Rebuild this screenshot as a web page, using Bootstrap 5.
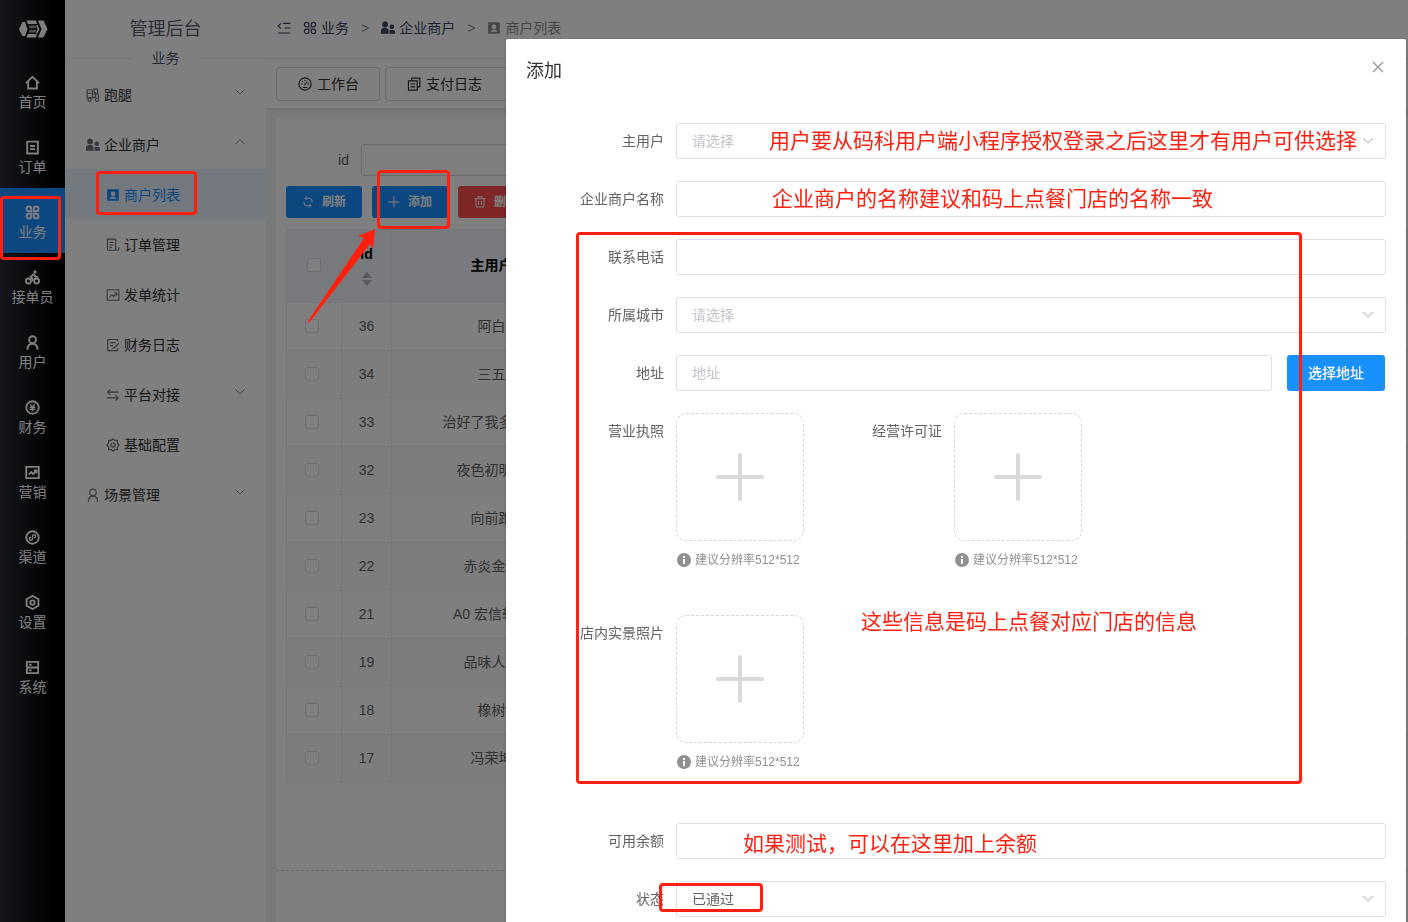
<!DOCTYPE html>
<html lang="zh-CN">
<head>
<meta charset="utf-8">
<meta name="viewport" content="width=device-width, initial-scale=1">
<title>管理后台</title>
<link href="https://cdn.jsdelivr.net/npm/bootstrap@5.3.0/dist/css/bootstrap.min.css" rel="stylesheet">
<style>
:root{--blue:#1890ff;--line:#dcdfe6;--note:#ff2010}
body{font-family:"Liberation Sans","Noto Sans CJK SC",sans-serif;font-size:14px;line-height:20px;color:#303133;overflow:hidden}
a{color:inherit;text-decoration:none}
.ico{width:14px;height:14px;flex:none;fill:none;stroke:currentColor;stroke-width:2}
.shell{height:100vh}
/* icon rail */
.rail{width:65px;background:linear-gradient(90deg,#282c36,#000 85%);color:#fff}
.rail-logo{height:58px}
.rail-logo svg{width:30px;height:20px}
.rail-item{height:65px;gap:2px;padding-top:5px}
.rail-item .ico{width:15px;height:15px;stroke-width:3}
.rail-item.active{background:var(--blue)}
/* section menu */
.side{width:201px;background:#fff}
.side-title{height:58px;font-size:18px;color:#5a6070}
.side-split{height:0;color:#505668}
.side-split::before,.side-split::after{content:"";flex:1;height:1px;background:#ebeef5}
.side-split span{width:68px;text-align:center}
.side-menu{padding-top:11px}
.side-item{height:50px;padding:2px 20px 0 21px;gap:4px}
.side-item.sub{padding-left:41px}
.side-item .ico{color:#6c6f78}
.side-item .arrow{width:12px;height:12px;margin:-6px 0 0 auto;color:#82858e}
.side-item.active,.side-item.active .ico{color:var(--blue)}
.side-item.active{background:#e6f3ff}
/* main area */
.work{background:#f0f4f4;min-width:0}
.topbar{height:59px;background:#fff;border-bottom:1px solid #ebeef5;padding:0 11px 2px;color:#3c4560}
.topbar ol{gap:12px}
.topbar li a,.topbar li span{gap:4px}
.topbar .sep{color:#8a8f9c}
.topbar .current{color:#8c8c8c}
.tabs{padding:8px 10px 7px;gap:5px;background:#fff;box-shadow:0 1px 4px rgba(0,21,41,.12)}
.tab-btn{height:34px;padding:0 20px 0 21px;gap:5px;border:1px solid #d4d8e2;border-radius:3px;background:#fff;color:#303133}
.tab-btn.closable{padding-right:40px}
.panel{margin:10px 0 0 10px;background:#fff;padding:26px 0 0 10px}
.filter{gap:12px}
.filter label{width:63px;text-align:right;color:#606266}
.filter input{height:32px;width:300px;border:1px solid #d0d4de;border-radius:3px}
.tools{gap:10px;margin:10px 0 11px}
.tool-btn{height:32px;width:76px;gap:8px;border:0;border-radius:3px;background:var(--blue);color:#fff;font-size:12px;font-weight:700}
.tool-btn .ico{width:12px;height:12px}
.tool-btn.del{background:#ff4d4f}
.grid{table-layout:fixed;width:1140px;border-collapse:collapse;text-align:center;color:#606266}
.grid th,.grid td{border:1px solid #ebeef5;height:48px;padding:0 0 2px;white-space:nowrap;overflow:hidden}
.grid th{height:73px;background:#f1f5fa;color:#000}
.grid tbody tr:nth-child(even){background:#fafafa}
.grid td:first-child{padding-right:4px}
.col-tick{width:55px}
.col-id{width:50px}
.col-user{width:200px}
.tick{appearance:none;display:block;width:14px;height:14px;margin:0 auto;border:1px solid #dcdfe6;border-radius:2px;background:#fff}
.sorter{width:10px;height:14px;fill:#b0b3ba}
.foot-line{margin:87px 0 0 -10px;border-top:1px dashed #d0d0d0}
/* dialog */
.veil{background:rgba(0,0,0,.5);overflow:hidden}
.dlg{max-width:900px;margin:39px 2px 0 auto}
.dlg .modal-content{border:0;border-radius:2px;box-shadow:0 1px 3px rgba(0,0,0,.3);padding:0 20px 40px;color:#606266}
.dlg-head{height:84px;padding-top:20px}
.dlg-head h1{font-size:18px;line-height:24px;color:#303133}
.dlg-close{width:16px;height:16px;border:0;padding:0;background:none;color:#909399}
.f-row{margin-bottom:22px}
.f-label{width:150px;padding-right:12px;line-height:36px;text-align:right;flex:none;white-space:nowrap}
.f-box{height:36px;flex:1;min-width:0;border:1px solid var(--line);border-radius:3px;padding:0 15px;color:#606266;background-color:#fff}
.f-box::placeholder{color:#c0c4cc}
select.f-box{appearance:none;background:#fff url("data:image/svg+xml,%3Csvg xmlns='http://www.w3.org/2000/svg' width='12' height='12' fill='none' stroke='%23c0c4cc' stroke-width='1.200'%3E%3Cpath d='M1 3l5 5 5-5'/%3E%3C/svg%3E") no-repeat right 11px center}
select.blank{color:#c0c4cc}
.pick{width:98px;height:36px;margin:0 1px 0 15px;border:0;border-radius:3px;background:var(--blue);color:#fff;font-weight:500}
.shot{width:128px;height:128px;border:1px dashed #d5d5d5;border-radius:10px;background:#fff;padding:0}
.shot svg{width:50px;height:50px;stroke:#d9d9d9;stroke-width:4;stroke-linecap:round}
.hint{height:36px;margin-bottom:16px;gap:4px;font-size:12px;color:#909090;padding:1px 0 0 1px}
.hint svg{width:14px;height:14px}
.money{margin-top:6px}
/* hand-drawn notes laid over the screen */
.note{position:absolute;pointer-events:none;z-index:5}
.note-box{border:3px solid var(--note);border-radius:4px}
.note-text{font-size:21px;line-height:28px;color:var(--note);white-space:nowrap}
.notes-left{position:fixed;inset:0;z-index:2000;pointer-events:none}
.n-user{left:263px;top:88px}
.n-name{left:266px;top:146px}
.n-shop{left:355px;top:569px}
.n-money{left:237px;top:791px}
.n-info{left:70px;top:193px;width:726px;height:552px}
.n-state{left:153px;top:844px;width:104px;height:29px}
.n-rail{left:0;top:196px;width:61px;height:64px}
.n-menu{left:96px;top:171px;width:101px;height:44px}
.n-add{left:377px;top:170px;width:73px;height:59px}
.n-arrow{left:300px;top:220px;width:80px;height:110px}
</style>
</head>
<body>
<svg class="d-none">
<symbol id="home" viewBox="0 0 24 24"><path d="M1.500 13L12 3l10.500 10M5 11v10.500h14V11"/></symbol>
<symbol id="order" viewBox="0 0 24 24"><path d="M3.500 2.500h17v19h-17zM8 9.500h8M8 14.500h8"/></symbol>
<symbol id="cmd" viewBox="0 0 24 24"><path d="M10 10H6.200A3.800 3.800 0 1 1 10 6.200zM14 10h3.800A3.800 3.800 0 1 0 14 6.200zM10 14H6.200a3.800 3.800 0 1 0 3.800 3.800zM14 14h3.800a3.800 3.800 0 1 1-3.800 3.800z"/></symbol>
<symbol id="bike" viewBox="0 0 24 24"><circle cx="5.500" cy="17.500" r="4"/><circle cx="18.500" cy="17.500" r="4"/><circle cx="16" cy="3" r="2.500" fill="currentColor" stroke="none"/><path d="M12 18v-4l-3-3 5-4 3 4h4"/></symbol>
<symbol id="user" viewBox="0 0 24 24"><circle cx="12" cy="7.500" r="5.500"/><path d="M4 23.500c0-6 3-9.500 8-9.500s8 3.500 8 9.500"/></symbol>
<symbol id="yen" viewBox="0 0 24 24"><circle cx="12" cy="12" r="10"/><path stroke-width="2.300" d="M8.500 7l3.500 4 3.500-4M7.500 11.500h9M7.500 14.700h9M12 11v7"/></symbol>
<symbol id="chart" viewBox="0 0 24 24"><path d="M2 3h20v18H2zM6 15.500l4-4 3 3 4.500-4.500M14 8.500h4.500V13"/></symbol>
<symbol id="link" viewBox="0 0 24 24"><circle cx="12" cy="12" r="10"/><path stroke-width="2.300" d="M9.500 11.500a2.500 2.500 0 1 0 2.500 2.500v-4a2.500 2.500 0 1 1 2.500 2.500"/></symbol>
<symbol id="hex" viewBox="0 0 24 24"><path d="M12 1.500l9.500 5.200v10.600l-9.500 5.200-9.500-5.200V6.700z"/><circle cx="12" cy="12" r="3.500"/></symbol>
<symbol id="server" viewBox="0 0 24 24"><path d="M3 3h18v18H3zM3 12h18M6.500 7.500h4M6.500 16.500h4"/></symbol>
<symbol id="scooter" viewBox="0 0 24 24"><path d="M2 3h9v14H2zM2 9h9M14 2h6v8h-6zM20 9l2 8M11 16h5V7"/><circle cx="6" cy="20" r="2.800"/><circle cx="19" cy="20" r="2.800"/></symbol>
<symbol id="people" viewBox="0 0 24 24"><g fill="currentColor" stroke="none"><circle cx="7" cy="6" r="5"/><circle cx="18.500" cy="10" r="4"/><path d="M0 22v-5c0-3 2-5 5-5h3c3 0 5 2 5 5v5zM14.500 22v-6.500h6c2 0 3.500 1.500 3.500 3.500v3z"/></g></symbol>
<symbol id="badge" viewBox="0 0 24 24"><path fill="currentColor" stroke="none" fill-rule="evenodd" d="M3 2h18a1 1 0 0 1 1 1v18a1 1 0 0 1-1 1H3a1 1 0 0 1-1-1V3a1 1 0 0 1 1-1zm9 4a4 4 0 1 0 0 8 4 4 0 0 0 0-8zM6 18.500h12c-1-2.500-3-3.500-6-3.500s-5 1-6 3.500z"/></symbol>
<symbol id="bill" viewBox="0 0 24 24"><path d="M2.500 2h14v19H5a2.500 2.500 0 0 1-2.500-2.500zM6 7.500h7M6 12h7M6 16h4M15 21h5a2 2 0 0 0 2-2v-3"/></symbol>
<symbol id="edit" viewBox="0 0 24 24"><path d="M20 6V2.500H3v19h17V18M7 8h9M7 13h5M22 9l-8 8-3 1"/></symbol>
<symbol id="swap" viewBox="0 0 24 24"><path d="M22 7H3M7.500 2.500L3 7l4.500 4.500M2 17h19M16.500 12.500L21 17l-4.500 4.500"/></symbol>
<symbol id="gear" viewBox="0 0 24 24"><path d="M12 1.500l3 2.500h4.500v4.500L22.500 12l-3 3.500V20H15l-3 2.500L9 20H4.500v-4.500l-3-3.500 3-3.500V4H9z"/><circle cx="12" cy="12" r="3.500"/></symbol>
<symbol id="down" viewBox="0 0 12 12"><path d="M1.500 3.500L6 8l4.500-4.500" stroke-width="1"/></symbol>
<symbol id="up" viewBox="0 0 12 12"><path d="M1.500 8L6 3.500 10.500 8" stroke-width="1"/></symbol>
<symbol id="fold" viewBox="0 0 24 24"><path d="M10 4h13M13 12h10M2 20.500h21M7 4L2 8.500 7 13"/></symbol>
<symbol id="dash" viewBox="0 0 24 24"><circle cx="12" cy="12" r="10.500"/><path d="M11 14l5-6M5.500 12h2M12 5v2M7 7l1.500 1.500M16.500 12h2M8 18h8"/></symbol>
<symbol id="copy" viewBox="0 0 24 24"><path d="M8 6V2h14v15h-4M2.500 6.500h15v16h-15zM6 12h8M6 17h8"/></symbol>
<symbol id="sync" viewBox="0 0 24 24"><path d="M6 4.500h9a5 5 0 0 1 5 5V13M9.500 1L6 4.500 9.500 8M18 19.500H9a5 5 0 0 1-5-5V11M14.500 16l3.500 3.500-3.500 3.500"/></symbol>
<symbol id="plus" viewBox="0 0 24 24"><path d="M12 1v22M1 12h22"/></symbol>
<symbol id="trash" viewBox="0 0 24 24"><path d="M1 5.500h22M4 6v16h16V6M8 5V1.500h8V5M9.500 10v8M14.500 10v8"/></symbol>
<symbol id="sort" viewBox="0 0 10 14"><path stroke="none" d="M0 6l5-6 5 6zM0 8h10l-5 6z"/></symbol>
<symbol id="info" viewBox="0 0 14 14"><circle cx="7" cy="7" r="7" fill="#909090"/><path d="M6 3h2v2H6zM6 6h2v5H6z" fill="#fff"/></symbol>
</svg>

<div class="shell d-flex">
  <nav class="rail d-flex flex-column flex-shrink-0" aria-label="主导航">
    <a href="#" class="rail-logo d-flex align-items-center justify-content-center" aria-label="管理后台">
      <svg viewBox="0 0 30 20"><g fill="#fff"><path d="M4.500 3H7l2.500 7L7 17H4.500L1 10zM20 1.500h5.500L29.500 10l-4 8.500H20L23.500 10z"/><path d="M8.500 1.500H18l1 3.500H9.800zM19.500 6l2 4-2 4.500L18 14l1.500-4L18 6.500zM8.500 18.500H18l1-3.500H9.800z"/><path opacity=".6" d="M10.500 6.500h7l1 2.700h-7zM11.500 10.800h7l-1 2.700h-7z"/></g></svg>
    </a>
    <a href="#" class="rail-item d-flex flex-column align-items-center justify-content-center"><svg class="ico"><use href="#home"/></svg>首页</a>
    <a href="#" class="rail-item d-flex flex-column align-items-center justify-content-center"><svg class="ico"><use href="#order"/></svg>订单</a>
    <a href="#" class="rail-item active d-flex flex-column align-items-center justify-content-center"><svg class="ico"><use href="#cmd"/></svg>业务</a>
    <a href="#" class="rail-item d-flex flex-column align-items-center justify-content-center"><svg class="ico"><use href="#bike"/></svg>接单员</a>
    <a href="#" class="rail-item d-flex flex-column align-items-center justify-content-center"><svg class="ico"><use href="#user"/></svg>用户</a>
    <a href="#" class="rail-item d-flex flex-column align-items-center justify-content-center"><svg class="ico"><use href="#yen"/></svg>财务</a>
    <a href="#" class="rail-item d-flex flex-column align-items-center justify-content-center"><svg class="ico"><use href="#chart"/></svg>营销</a>
    <a href="#" class="rail-item d-flex flex-column align-items-center justify-content-center"><svg class="ico"><use href="#link"/></svg>渠道</a>
    <a href="#" class="rail-item d-flex flex-column align-items-center justify-content-center"><svg class="ico"><use href="#hex"/></svg>设置</a>
    <a href="#" class="rail-item d-flex flex-column align-items-center justify-content-center"><svg class="ico"><use href="#server"/></svg>系统</a>
  </nav>

  <aside class="side flex-shrink-0">
    <div class="side-title d-flex align-items-center justify-content-center">管理后台</div>
    <div class="side-split d-flex align-items-center"><span>业务</span></div>
    <nav class="side-menu" aria-label="业务菜单">
      <a href="#" class="side-item d-flex align-items-center"><svg class="ico"><use href="#scooter"/></svg>跑腿<svg class="ico arrow"><use href="#down"/></svg></a>
      <a href="#" class="side-item d-flex align-items-center"><svg class="ico"><use href="#people"/></svg>企业商户<svg class="ico arrow"><use href="#up"/></svg></a>
      <a href="#" class="side-item sub active d-flex align-items-center"><svg class="ico"><use href="#badge"/></svg>商户列表</a>
      <a href="#" class="side-item sub d-flex align-items-center"><svg class="ico"><use href="#bill"/></svg>订单管理</a>
      <a href="#" class="side-item sub d-flex align-items-center"><svg class="ico"><use href="#chart"/></svg>发单统计</a>
      <a href="#" class="side-item sub d-flex align-items-center"><svg class="ico"><use href="#edit"/></svg>财务日志</a>
      <a href="#" class="side-item sub d-flex align-items-center"><svg class="ico"><use href="#swap"/></svg>平台对接<svg class="ico arrow"><use href="#down"/></svg></a>
      <a href="#" class="side-item sub d-flex align-items-center"><svg class="ico"><use href="#gear"/></svg>基础配置</a>
      <a href="#" class="side-item d-flex align-items-center"><svg class="ico"><use href="#user"/></svg>场景管理<svg class="ico arrow"><use href="#down"/></svg></a>
    </nav>
  </aside>

  <main class="work flex-grow-1 d-flex flex-column overflow-hidden">
    <header class="topbar d-flex align-items-center flex-shrink-0">
      <svg class="ico"><use href="#fold"/></svg>
      <ol class="list-unstyled d-flex align-items-center mb-0 ms-2 ps-1">
        <li><a href="#" class="d-flex align-items-center"><svg class="ico"><use href="#cmd"/></svg>业务</a></li>
        <li class="sep">&gt;</li>
        <li><a href="#" class="d-flex align-items-center"><svg class="ico"><use href="#people"/></svg>企业商户</a></li>
        <li class="sep">&gt;</li>
        <li><span class="current d-flex align-items-center"><svg class="ico"><use href="#badge"/></svg>商户列表</span></li>
      </ol>
    </header>
    <div class="tabs d-flex flex-shrink-0">
      <button class="tab-btn d-flex align-items-center"><svg class="ico"><use href="#dash"/></svg>工作台</button>
      <button class="tab-btn closable d-flex align-items-center"><svg class="ico"><use href="#copy"/></svg>支付日志</button>
    </div>
    <section class="panel flex-grow-1">
      <div class="filter d-flex align-items-center"><label for="fid">id</label><input id="fid" type="text"></div>
      <div class="tools d-flex">
        <button class="tool-btn d-flex align-items-center justify-content-center"><svg class="ico"><use href="#sync"/></svg>刷新</button>
        <button class="tool-btn d-flex align-items-center justify-content-center"><svg class="ico"><use href="#plus"/></svg>添加</button>
        <button class="tool-btn del d-flex align-items-center justify-content-center"><svg class="ico"><use href="#trash"/></svg>删除</button>
      </div>
      <table class="grid">
        <colgroup><col class="col-tick"><col class="col-id"><col class="col-user"><col></colgroup>
        <thead><tr><th><input class="tick" type="checkbox" aria-label="全选"></th><th>id<br><svg class="sorter mt-2"><use href="#sort"/></svg></th><th>主用户</th><th></th></tr></thead>
        <tbody>
          <tr><td><input class="tick" type="checkbox" aria-label="36"></td><td>36</td><td>阿白</td><td></td></tr>
          <tr><td><input class="tick" type="checkbox" aria-label="34"></td><td>34</td><td>三五</td><td></td></tr>
          <tr><td><input class="tick" type="checkbox" aria-label="33"></td><td>33</td><td>治好了我多年的</td><td></td></tr>
          <tr><td><input class="tick" type="checkbox" aria-label="32"></td><td>32</td><td>夜色初明时</td><td></td></tr>
          <tr><td><input class="tick" type="checkbox" aria-label="23"></td><td>23</td><td>向前跑</td><td></td></tr>
          <tr><td><input class="tick" type="checkbox" aria-label="22"></td><td>22</td><td>赤炎金星</td><td></td></tr>
          <tr><td><input class="tick" type="checkbox" aria-label="21"></td><td>21</td><td>A0 宏信轩店</td><td></td></tr>
          <tr><td><input class="tick" type="checkbox" aria-label="19"></td><td>19</td><td>品味人生</td><td></td></tr>
          <tr><td><input class="tick" type="checkbox" aria-label="18"></td><td>18</td><td>橡树</td><td></td></tr>
          <tr><td><input class="tick" type="checkbox" aria-label="17"></td><td>17</td><td>冯荣坤</td><td></td></tr>
        </tbody>
      </table>
      <div class="foot-line"></div>
    </section>
  </main>
</div>

<div class="modal veil d-block" role="dialog" aria-labelledby="dlgTitle">
  <div class="modal-dialog dlg">
    <form class="modal-content position-relative">
      <div class="dlg-head d-flex justify-content-between">
        <h1 id="dlgTitle" class="fw-normal mb-0">添加</h1>
        <button type="button" class="dlg-close d-flex" aria-label="关闭"><svg class="ico w-100 h-100" viewBox="0 0 16 16"><path stroke-width="1.200" d="M3 3l10 10M13 3L3 13"/></svg></button>
      </div>
      <div class="f-row d-flex"><label class="f-label" for="u">主用户</label><select id="u" class="f-box blank"><option>请选择</option></select></div>
      <div class="f-row d-flex"><label class="f-label" for="n">企业商户名称</label><input id="n" class="f-box" type="text"></div>
      <div class="f-row d-flex"><label class="f-label" for="t">联系电话</label><input id="t" class="f-box" type="text"></div>
      <div class="f-row d-flex"><label class="f-label" for="c">所属城市</label><select id="c" class="f-box blank"><option>请选择</option></select></div>
      <div class="f-row d-flex"><label class="f-label" for="a">地址</label><input id="a" class="f-box" type="text" placeholder="地址"><button type="button" class="pick">选择地址</button></div>
      <div class="f-row d-flex">
        <label class="f-label" for="p1">营业执照</label>
        <div><button type="button" id="p1" class="shot d-flex align-items-center justify-content-center"><svg viewBox="0 0 50 50"><path d="M25 3v44M3 25h44"/></svg></button><div class="hint d-flex align-items-center"><svg><use href="#info"/></svg>建议分辨率512*512</div></div>
        <label class="f-label" for="p2">经营许可证</label>
        <div><button type="button" id="p2" class="shot d-flex align-items-center justify-content-center"><svg viewBox="0 0 50 50"><path d="M25 3v44M3 25h44"/></svg></button><div class="hint d-flex align-items-center"><svg><use href="#info"/></svg>建议分辨率512*512</div></div>
      </div>
      <div class="f-row d-flex">
        <label class="f-label" for="p3">店内实景照片</label>
        <div><button type="button" id="p3" class="shot d-flex align-items-center justify-content-center"><svg viewBox="0 0 50 50"><path d="M25 3v44M3 25h44"/></svg></button><div class="hint d-flex align-items-center"><svg><use href="#info"/></svg>建议分辨率512*512</div></div>
      </div>
      <div class="f-row money d-flex"><label class="f-label" for="m">可用余额</label><input id="m" class="f-box" type="text"></div>
      <div class="f-row d-flex"><label class="f-label" for="s">状态</label><select id="s" class="f-box"><option>已通过</option></select></div>

      <div class="note note-text n-user">用户要从码科用户端小程序授权登录之后这里才有用户可供选择</div>
      <div class="note note-text n-name">企业商户的名称建议和码上点餐门店的名称一致</div>
      <div class="note note-text n-shop">这些信息是码上点餐对应门店的信息</div>
      <div class="note note-text n-money">如果测试，可以在这里加上余额</div>
      <div class="note note-box n-info"></div>
      <div class="note note-box n-state"></div>
    </form>
  </div>
</div>

<div class="notes-left">
  <div class="note note-box n-rail"></div>
  <div class="note note-box n-menu"></div>
  <div class="note note-box n-add"></div>
  <svg class="note n-arrow"><path fill="#ff2010" d="M75 9L58 16l6 2L8 101l1 2L70 24l3 5z"/></svg>
</div>
<script src="https://cdn.jsdelivr.net/npm/bootstrap@5.3.0/dist/js/bootstrap.bundle.min.js"></script>
</body>
</html>
